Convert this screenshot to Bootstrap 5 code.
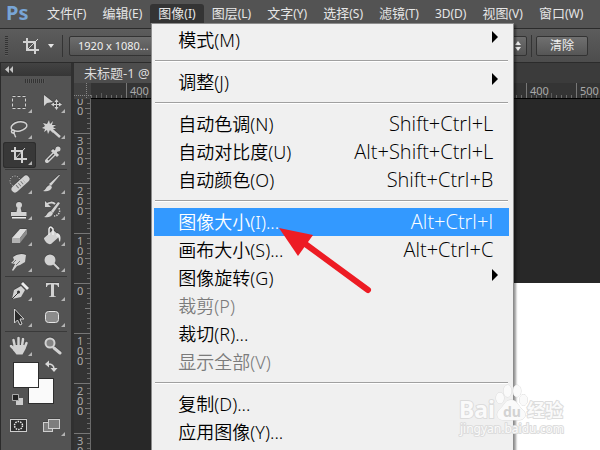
<!DOCTYPE html>
<html lang="zh-CN">
<head>
<meta charset="utf-8">
<meta name="viewport" content="width=device-width, initial-scale=1">
<title>Ps</title>
<link href="https://cdn.jsdelivr.net/npm/bootstrap@5.3.0/dist/css/bootstrap.min.css" rel="stylesheet">
<style>
  :root { --panel: #535353; --edge: #2b2b2b; --icon: #d2d2d2; }
  body { font-family: "Noto Sans", "Noto Sans CJK SC", sans-serif; background: #282828; color: #e6e6e6; font-size: 13px; }
  button, select { font-family: inherit; }

  /* menu bar */
  .app-menubar { background: var(--panel); height: 28px; padding-top: 4px; z-index: 10; }
  .app-logo { width: 39px; padding-left: 6px; font-size: 20px; font-weight: 700; line-height: 18px; color: #78a5d6; }
  .app-menubar .nav-link { height: 19px; line-height: 19px; padding: 0 8px; color: #e6e6e6; font-size: 13px; white-space: nowrap; }
  .app-menubar .nav-link span { font-size: 12px; }
  .app-menubar .nav-link.show { background: #343434; border-radius: 3px 3px 0 0; }

  /* open menu */
  .image-menu { top: 100%; left: 1px; width: 363px; min-height: calc(100vh - 20px); padding: 2px 4px 0 2px; margin: 0; border: 1px solid #8c8c8c; border-radius: 0; background: #f0f0f0; box-shadow: 2px 2px 2px #0006; }
  .image-menu .dropdown-item { height: 28px; line-height: 28px; padding: 0 16px 0 24px; font-size: 18px; font-weight: 360; color: #000; }
  .image-menu .dropdown-item span { font-family: "Open Sans", "Noto Sans", sans-serif; font-size: 20px; }
  .image-menu .dropdown-item.active { background: #3399ff; color: #fff; }
  .image-menu .dropdown-item.disabled { color: #7b7b7b; }
  .image-menu .dropdown-divider { height: 2px; margin: 6px 1px; border: 0; border-top: 1px solid #a0a0a0; background: #fff; opacity: 1; }
  .sub-arrow { width: 0; border: 6px solid transparent; border-left: 6px solid #000; border-right: 0; margin-right: -5px; margin-bottom: 6px; }
  .pointer-arrow { left: 125px; top: 202px; pointer-events: none; }

  /* options bar */
  .options-bar { height: 35px; border-top: 1px solid var(--edge); border-bottom: 1px solid var(--edge); background: linear-gradient(#5c5c5c, #4d4d4d); padding-left: 5px; }
  .grip-v { width: 3px; height: 20px; background: repeating-linear-gradient(#333 0 1px, #5a5a5a 1px 2px); }
  .bar-rule { width: 1px; height: 22px; background: #343434; }
  .crop-tool { width: 50px; padding: 0 0 0 14px; line-height: 1; }
  .ratio-select, .clear-btn { height: 20px; border: 1px solid #333; border-radius: 2px; background-color: #616161; color: #f0f0f0; font-size: 12px; line-height: 16px; }
  .ratio-select { width: 458px; flex: none; margin-left: 6px; padding: 0 16px 0 8px; font-size: 11px; appearance: none;
    background: url("data:image/svg+xml,%3Csvg xmlns='http://www.w3.org/2000/svg' width='8' height='10'%3E%3Cpath d='M1 4h6L4 0zM1 6h6L4 10z' fill='%23e8e8e8'/%3E%3C/svg%3E") no-repeat right 4px center, linear-gradient(#6d6d6d, #545454); }
  .clear-btn { width: 52px; padding: 0; background-image: linear-gradient(#707070, #565656); }

  /* tools */
  .tool-panel { width: 74px; flex: none; background: var(--panel); border-left: 1px solid var(--edge); border-right: 3px solid #303030; }
  .panel-head { height: 13px; background: linear-gradient(#434343, #363636); padding-left: 4px; }
  .grip-h { width: 20px; height: 4px; margin: 3px 0 7px 24px; background: repeating-linear-gradient(90deg, #333 0 1px, #5a5a5a 1px 2px); }
  .tools { display: grid; grid-template-columns: 33px 33px; padding-left: 2px; }
  .tools button { position: relative; height: 26px; padding: 0; border: 0; background: none; color: var(--icon); }
  .tools button svg { display: block; filter: drop-shadow(0 -1px 0 #3337); }
  .tools .more::after { content: ""; position: absolute; right: 4px; bottom: 3px; border: 2px solid #b4b4b4; border-left-color: transparent; border-top-color: transparent; }
  .tools .chosen { background: #383838; box-shadow: inset 0 0 0 1px #2d2d2d; border-radius: 3px; }
  .tool-rule { height: 1px; margin: 1px 4px; background: #3a3a3a; }
  .swatches { height: 54px; }
  .swatch { width: 26px; height: 26px; padding: 0; border: 1px solid #2e2e2e; background: #fff; }
  .swatch-front { left: 12px; top: 3px; z-index: 1; }
  .swatch-back { left: 27px; top: 19px; background: #fafafa; }
  .swatch-swap { left: 43px; top: 0; width: 14px; height: 14px; }
  .swatch-reset { left: 10px; top: 34px; width: 14px; height: 14px; }
  .swatches svg, .swatches button { display: block; }

  /* document */
  .tab-strip { height: 20px; background: #3b3b3b; }
  .doc-tab { width: 300px; height: 20px; padding: 0 10px; border: 0; text-align: left; background: #4d4d4d; color: #dcdcdc; line-height: 19px; font-size: 13px; }
  .ruler-corner { width: 17px; height: 16px; background: #424242; }
  .ruler-top { height: 16px; color: #a8a8a8; font-size: 11px; line-height: 16px; padding-left: 35px; border-bottom: 1px solid #000;
    background:
      repeating-linear-gradient(90deg, #777 0 1px, transparent 1px 50px) 35px 0 / 1000px 100%,
      repeating-linear-gradient(90deg, #5c5c5c 0 1px, transparent 1px 25px) 10px 100% / 1000px 5px repeat-x,
      repeating-linear-gradient(90deg, #6b6b6b 0 1px, transparent 1px 5px) 0 100% / 50px 3px repeat-x, #343434; }
  .ruler-top span { flex: none; width: 50px; padding-left: 4px; }
  .ruler-side { width: 17px; flex: none; color: #a8a8a8; font-size: 11px; line-height: 10px; border-right: 1px solid #6a6a6a;
    background:
      repeating-linear-gradient(#777 0 1px, transparent 1px 50px) 0 -16px / 100% 500px,
      repeating-linear-gradient(#777 0 1px, transparent 1px 25px) 100% -16px / 5px 500px repeat-y,
      repeating-linear-gradient(#6b6b6b 0 1px, transparent 1px 5px) 100% -1px / 3px 500px repeat-y, #343434; }
  .ruler-side ol { margin: -16px 0 0; padding: 0; list-style: none; }
  .ruler-side li { height: 50px; width: 11px; padding: 3px 0 0 3px; word-break: break-all; }
  .art-area { padding: 184px 0 0 235px; background: #282828; }
  .art-sheet { height: 100%; background: #fff; }
  .watermark { right: 30px; bottom: 12px; z-index: 20; pointer-events: none; }
</style>
<script src="https://cdn.jsdelivr.net/npm/bootstrap@5.3.0/dist/js/bootstrap.bundle.min.js"></script>
</head>
<body class="vh-100 overflow-hidden d-flex flex-column position-relative">

<header class="app-menubar d-flex flex-shrink-0 position-relative">
  <div class="app-logo flex-shrink-0">Ps</div>
  <ul class="nav flex-nowrap align-self-start">
    <li class="nav-item"><a class="nav-link" href="#">文件<span>(F)</span></a></li>
    <li class="nav-item"><a class="nav-link" href="#">编辑<span>(E)</span></a></li>
    <li class="nav-item dropdown">
      <a class="nav-link show" href="#" aria-expanded="true">图像<span>(I)</span></a>
      <ul class="dropdown-menu image-menu show">
        <li><a class="dropdown-item d-flex justify-content-between align-items-center" href="#">模式(M)<i class="sub-arrow"></i></a></li>
        <li><hr class="dropdown-divider"></li>
        <li><a class="dropdown-item d-flex justify-content-between align-items-center" href="#">调整(J)<i class="sub-arrow"></i></a></li>
        <li><hr class="dropdown-divider"></li>
        <li><a class="dropdown-item d-flex justify-content-between" href="#">自动色调(N)<span>Shift+Ctrl+L</span></a></li>
        <li><a class="dropdown-item d-flex justify-content-between" href="#">自动对比度(U)<span>Alt+Shift+Ctrl+L</span></a></li>
        <li><a class="dropdown-item d-flex justify-content-between" href="#">自动颜色(O)<span>Shift+Ctrl+B</span></a></li>
        <li><hr class="dropdown-divider"></li>
        <li><a class="dropdown-item active d-flex justify-content-between" href="#">图像大小(I)...<span>Alt+Ctrl+I</span></a></li>
        <li><a class="dropdown-item d-flex justify-content-between" href="#">画布大小(S)...<span>Alt+Ctrl+C</span></a></li>
        <li><a class="dropdown-item d-flex justify-content-between align-items-center" href="#">图像旋转(G)<i class="sub-arrow"></i></a></li>
        <li><a class="dropdown-item disabled" href="#">裁剪(P)</a></li>
        <li><a class="dropdown-item" href="#">裁切(R)...</a></li>
        <li><a class="dropdown-item disabled" href="#">显示全部(V)</a></li>
        <li><hr class="dropdown-divider"></li>
        <li><a class="dropdown-item" href="#">复制(D)...</a></li>
        <li><a class="dropdown-item" href="#">应用图像(Y)...</a></li>
        <li class="pointer-arrow position-absolute" aria-hidden="true">
          <svg class="d-block" width="98" height="70" viewBox="0 0 98 70"><path d="M27 17 91 64" stroke="#ed1c24" stroke-width="6" stroke-linecap="round"/><path d="M2 2 36 9 21 30z" fill="#ed1c24"/></svg>
        </li>
      </ul>
    </li>
    <li class="nav-item"><a class="nav-link" href="#">图层<span>(L)</span></a></li>
    <li class="nav-item"><a class="nav-link" href="#">文字<span>(Y)</span></a></li>
    <li class="nav-item"><a class="nav-link" href="#">选择<span>(S)</span></a></li>
    <li class="nav-item"><a class="nav-link" href="#">滤镜<span>(T)</span></a></li>
    <li class="nav-item"><a class="nav-link" href="#"><span>3D(D)</span></a></li>
    <li class="nav-item"><a class="nav-link" href="#">视图<span>(V)</span></a></li>
    <li class="nav-item"><a class="nav-link" href="#">窗口<span>(W)</span></a></li>
  </ul>
</header>

<div class="options-bar d-flex align-items-center flex-shrink-0">
  <div class="grip-v"></div>
  <button class="crop-tool btn border-0 d-flex align-items-center gap-2" aria-label="裁剪工具">
    <svg width="18" height="18" viewBox="0 0 18 18" fill="none" stroke="#d2d2d2" stroke-width="2"><path d="M5 1v12h12M1 5h12v12"/><path d="M5 13 16 2" stroke-width="1"/></svg>
    <svg width="6" height="4" viewBox="0 0 6 4"><path d="M0 0h6L3 4z" fill="#e6e6e6"/></svg>
  </button>
  <div class="bar-rule ms-1"></div>
  <select class="ratio-select" aria-label="裁剪尺寸"><option>1920 x 1080...</option></select>
  <div class="bar-rule mx-1"></div>
  <button class="clear-btn flex-shrink-0">清除</button>
</div>

<div class="d-flex flex-fill overflow-hidden">
  <aside class="tool-panel">
    <div class="panel-head d-flex align-items-center"><svg width="9" height="7" viewBox="0 0 9 7"><path d="M4 0v7L0 3.500zM8 0v7L4.500 3.500z" fill="#c4c4c4"/></svg></div>
    <div class="grip-h"></div>

    <div class="tools">
      <button class="more" aria-label="选框"><svg width="33" height="26"><rect x="9.500" y="6.500" width="13" height="12" fill="none" stroke="currentColor" stroke-dasharray="3 2"/></svg></button>
      <button class="more" aria-label="移动"><svg width="33" height="26" fill="currentColor"><path d="M8 5v11l3-3 6-1z"/><path d="M20.500 9l2 3h-1.500v2h2v-1.500l3 2-3 2V15h-2v2h1.500l-2 3-2-3H20v-2h-2v1.500l-3-2 3-2V14h2v-2h-1.500z"/></svg></button>
      <button class="more" aria-label="套索"><svg width="33" height="26" fill="none" stroke="currentColor" stroke-width="1.500"><ellipse cx="16" cy="10.500" rx="8" ry="4.500" transform="rotate(-12 16 10.500)"/><circle cx="10" cy="15.500" r="1.500"/><path d="M10 17c3 1 1 3 3 4"/></svg></button>
      <button class="more" aria-label="魔棒"><svg width="33" height="26" fill="currentColor"><path d="M13 4l1 4 3-3-1 4 4 0-3 2 3 2-4 0 1 4-3-3-2 4-1-4-3 2 1-3-3-1 3-2-2-3 4 1z"/><path d="M15 13l9 8" stroke="currentColor" stroke-width="2.500"/></svg></button>
      <button class="more chosen" aria-label="裁剪"><svg width="33" height="26" fill="none" stroke="currentColor" stroke-width="2"><path d="M12 5v12h12M8 9h11v12"/><path d="M12 17 22 6" stroke-width="1"/></svg></button>
      <button class="more" aria-label="吸管"><svg width="33" height="26"><path d="M11 19l8-8" stroke="currentColor" stroke-width="4" stroke-linecap="round"/><path d="M12 18l7-7" stroke="#444" stroke-width="1.500"/><path d="M16 8l6 6M19 10l3-3" stroke="currentColor" stroke-width="3"/><circle cx="22" cy="7" r="2.500" fill="currentColor"/></svg></button>
    </div>
    <div class="tool-rule"></div>

    <div class="tools">
      <button class="more" aria-label="修复画笔"><svg width="33" height="26"><circle cx="12" cy="10" r="5" fill="none" stroke="currentColor" stroke-dasharray="1 1.500"/><path d="M12 18 23 8" stroke="currentColor" stroke-width="7" stroke-linecap="round"/><path d="M14 16 21 10" stroke="#777" stroke-width="4" stroke-dasharray="1 2"/></svg></button>
      <button class="more" aria-label="画笔"><svg width="33" height="26" fill="currentColor"><path d="M24 4 15 15l-2-2L23 4z"/><path d="M14 14l2 2c-1 4-5 5-9 4 3-1 3-5 7-6z"/></svg></button>
      <button class="more" aria-label="图章"><svg width="33" height="26" fill="currentColor"><circle cx="16" cy="8" r="3"/><path d="M14.500 10h3l1 5h5v4H8v-4h5.500z"/><path d="M9 20h14v1.500H9z" fill="#eee"/></svg></button>
      <button class="more" aria-label="历史记录画笔"><svg width="33" height="26" fill="currentColor"><path d="M24 6 17 16l-2-2 7-9z"/><path d="M15 14l2 2c-1 4-5 5-9 4 3-1 3-5 7-6z"/><path d="M10 8c3-3 7-3 9-1" fill="none" stroke="currentColor" stroke-width="2"/><path d="M9 4v6h6z"/><path d="M23 11c2 4-1 8-5 8" fill="none" stroke="currentColor" stroke-width="1.500" stroke-dasharray="1.500 1"/></svg></button>
      <button class="more" aria-label="橡皮擦"><svg width="33" height="26"><path d="M9 15 17 6h7l-7 9z" fill="#ddd"/><path d="M9 15h8v5H9z" fill="#b2b2b2"/><path d="M17 15l7-9v5l-7 9z" fill="#8d8d8d"/></svg></button>
      <button class="more" aria-label="油漆桶"><svg width="33" height="26"><path d="M8 15l9-8 7 6-9 8c-3 1-7-3-7-6z" fill="currentColor"/><path d="M13 12V6q1-4 4 0v6" fill="none" stroke="#ededed" stroke-width="1.500"/><path d="M21 10c4 1 4 5 3 9-2-2 0-5-4-6z" fill="#e4e4e4"/></svg></button>
      <button class="more" aria-label="涂抹"><svg width="33" height="26"><path d="M10 8q7-5 13-2l-1 7-5 3-3 1-4 5-1-1 3-6-4-1 3-3z" fill="currentColor"/><path d="M17 12l-4 4M13 11l-3 3" stroke="#777"/></svg></button>
      <button class="more" aria-label="减淡"><svg width="33" height="26"><circle cx="14" cy="11" r="5.500" fill="currentColor"/><path d="M17 14l6 6" stroke="currentColor" stroke-width="2"/></svg></button>
    </div>
    <div class="tool-rule"></div>

    <div class="tools">
      <button class="more" aria-label="钢笔"><svg width="33" height="26"><path d="M9 21l2-9 7-4 4 4-4 7z" fill="currentColor"/><path d="M18 6l2-2 6 6-2 2z" fill="#eee"/><path d="M9 21l6-6" stroke="#333"/><circle cx="15.500" cy="14" r="1.500" fill="#333"/></svg></button>
      <button class="more" aria-label="文字"><svg width="33" height="26" fill="currentColor"><path d="M10 5h13v4h-1q0-2.500-3-2.500h-1V17q0 1.500 2 1.500V19h-7v-.500q2 0 2-1.500V6.500h-1q-3 0-3 2.500h-1z"/></svg></button>
      <button class="more" aria-label="路径选择"><svg width="33" height="26"><path d="M11.500 5v14l3-3 2.500 5 2-1-2-5h4z" fill="#2c2c2c" stroke="currentColor"/></svg></button>
      <button class="more" aria-label="圆角矩形"><svg width="33" height="26"><rect x="9.500" y="7.500" width="13" height="11" rx="3" fill="#8b8b8b" stroke="#e6e6e6"/></svg></button>
    </div>
    <div class="tool-rule"></div>

    <div class="tools">
      <button class="more" aria-label="抓手"><svg width="33" height="26"><g stroke="currentColor" stroke-width="2.500" stroke-linecap="round"><path d="M12 14 10.500 7M15.500 13V5M19 13l1-7M21.500 15l2-5M12 17l-4-4"/></g><path d="M10.500 12h11l1 4-3 5.500h-6L10 17z" fill="currentColor"/></svg></button>
      <button aria-label="缩放"><svg width="33" height="26"><path d="M18 15l6 5" stroke="currentColor" stroke-width="3" stroke-linecap="round"/><circle cx="14" cy="10" r="4.500" fill="#858585" stroke="currentColor" stroke-width="2"/></svg></button>
    </div>

    <div class="swatches position-relative">
      <button class="swatch swatch-front position-absolute" aria-label="前景色"></button>
      <button class="swatch swatch-back position-absolute" aria-label="背景色"></button>
      <button class="swatch-swap position-absolute p-0 border-0 bg-transparent" aria-label="切换颜色"><svg width="14" height="14"><path d="M4 5q6 0 6 5" fill="none" stroke="#d8d8d8" stroke-width="1.500"/><path d="M1 5l4-3.500v7zM6.500 9h7L10 13z" fill="#d8d8d8"/></svg></button>
      <button class="swatch-reset position-absolute p-0 border-0 bg-transparent" aria-label="默认颜色"><svg width="14" height="14"><path d="M5 5h7v7H5z" fill="#ccc"/><path d="M1.500 1.500h6v6h-6z" fill="#222" stroke="#aaa"/></svg></button>
    </div>

    <div class="tools">
      <button aria-label="快速蒙版"><svg width="33" height="26"><rect x="7.500" y="6.500" width="16" height="12" fill="#2f2f2f" stroke="#cfcfcf"/><circle cx="15.500" cy="12.500" r="4" fill="none" stroke="#eee" stroke-width="1.500" stroke-dasharray="1.500 1"/></svg></button>
      <button class="more" aria-label="屏幕模式"><svg width="33" height="26" fill="#7d7d7d" stroke="#cfcfcf"><rect x="7.500" y="9.500" width="9" height="9"/><rect x="12.500" y="6.500" width="11" height="9"/></svg></button>
    </div>
  </aside>

  <main class="flex-fill d-flex flex-column overflow-hidden">
    <div class="tab-strip flex-shrink-0"><button class="doc-tab d-block">未标题-1 @</button></div>
    <div class="d-flex flex-shrink-0">
      <div class="ruler-corner flex-shrink-0"><svg class="d-block" width="17" height="16" fill="none" stroke="#888" stroke-dasharray="1 1"><path d="M12.500 0v16M0 12.500h17"/></svg></div>
      <div class="ruler-top flex-fill d-flex overflow-hidden">
        <span>400</span><span>300</span><span>200</span><span>100</span><span>0</span><span>100</span><span>200</span><span>300</span><span>400</span><span>500</span>
      </div>
    </div>
    <div class="d-flex flex-fill overflow-hidden">
      <div class="ruler-side overflow-hidden">
        <ol><li>400</li><li>300</li><li>200</li><li>100</li><li>0</li><li>100</li><li>200</li><li>300</li></ol>
      </div>
      <div class="art-area flex-fill"><div class="art-sheet"></div></div>
    </div>
  </main>
</div>

<div class="watermark position-absolute">
  <svg class="d-block" width="112" height="56" viewBox="0 0 112 56" fill="#fafafa" stroke="#dcdcdc" font-family="Noto Sans, Noto Sans CJK SC, sans-serif" font-weight="700" paint-order="stroke" stroke-width="2" stroke-linejoin="round">
    <text x="1" y="36" font-size="23">Bai</text>
    <g stroke-width="1"><ellipse cx="42" cy="16" rx="4" ry="5.500"/><ellipse cx="49.500" cy="9" rx="4" ry="6"/><ellipse cx="59" cy="9" rx="4" ry="6"/><ellipse cx="65.500" cy="18" rx="4" ry="5.500"/><path d="M53 18c6 0 7 6 11 9 6 5 3 11-3 11H46c-7 0-9-6-4-11 5-4 5-9 11-9z"/></g>
    <text x="45" y="35" font-size="14" fill="#d2d2d2" stroke="none">du</text>
    <text x="69" y="35" font-size="18">经验</text>
    <text x="2" y="51" font-size="12" font-weight="400">jingyan.baidu.com</text>
  </svg>
</div>
</body>
</html>
